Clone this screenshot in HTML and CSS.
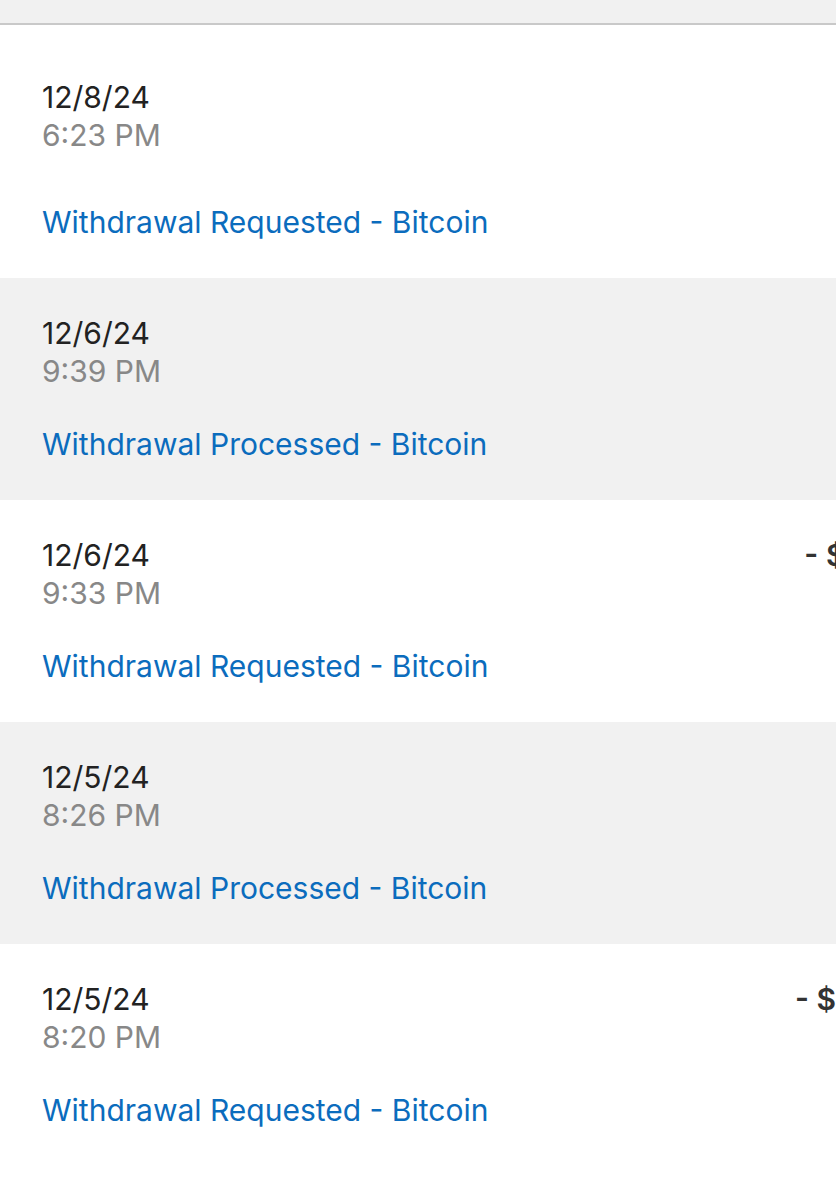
FILE: index.html
```html
<!DOCTYPE html>
<html lang="en">
<head>
    <meta charset="UTF-8">
    <meta name="viewport" content="width=device-width, initial-scale=1.0">
    <title>Transactions</title>
    <link rel="stylesheet" href="styles.css">
</head>
<body>
    <div class="top-bar"></div>
    <main class="history">
        <div class="row first">
            <div class="info">
                <div class="date">12/8/24</div>
                <div class="time">6:23 PM</div>
                <a class="desc" href="#">Withdrawal Requested - Bitcoin</a>
            </div>
        </div>
        <div class="row alt">
            <div class="info">
                <div class="date">12/6/24</div>
                <div class="time">9:39 PM</div>
                <a class="desc" href="#">Withdrawal Processed - Bitcoin</a>
            </div>
        </div>
        <div class="row">
            <div class="info">
                <div class="date">12/6/24</div>
                <div class="time">9:33 PM</div>
                <a class="desc" href="#">Withdrawal Requested - Bitcoin</a>
            </div>
            <div class="amount">- $1500.00</div>
        </div>
        <div class="row alt">
            <div class="info">
                <div class="date">12/5/24</div>
                <div class="time">8:26 PM</div>
                <a class="desc" href="#">Withdrawal Processed - Bitcoin</a>
            </div>
        </div>
        <div class="row">
            <div class="info">
                <div class="date">12/5/24</div>
                <div class="time">8:20 PM</div>
                <a class="desc" href="#">Withdrawal Requested - Bitcoin</a>
            </div>
            <div class="amount">- $1,500.00</div>
        </div>
    </main>
</body>
</html>
```

FILE: styles.css
```css
body {
    margin: 0;
    padding: 0;
    background-color: #ffffff;
    font-family: Inter, "Noto Sans", sans-serif;
    overflow: hidden;
}

.top-bar {
    height: 23px;
    background-color: #f1f1f1;
    border-bottom: 2px solid #c9c9c9;
}

.history {
    width: 1006px;
}

.row {
    display: flex;
    justify-content: space-between;
    align-items: flex-start;
    padding: 36px 42px 37px 42px;
}

.row.first {
    padding-top: 53px;
}

.row.alt {
    background-color: #f1f1f1;
}

.info {
    display: flex;
    flex-direction: column;
    align-items: flex-start;
}

.date,
.time,
.desc,
.amount {
    font-size: 30px;
    line-height: 38px;
}

.date {
    color: #222222;
}

.time {
    color: #888888;
}

.desc {
    margin-top: 35px;
    color: #0b6cbd;
    text-decoration: none;
}

.row.first .desc {
    margin-top: 49px;
}

.amount {
    color: #333333;
    font-weight: 600;
}
```
